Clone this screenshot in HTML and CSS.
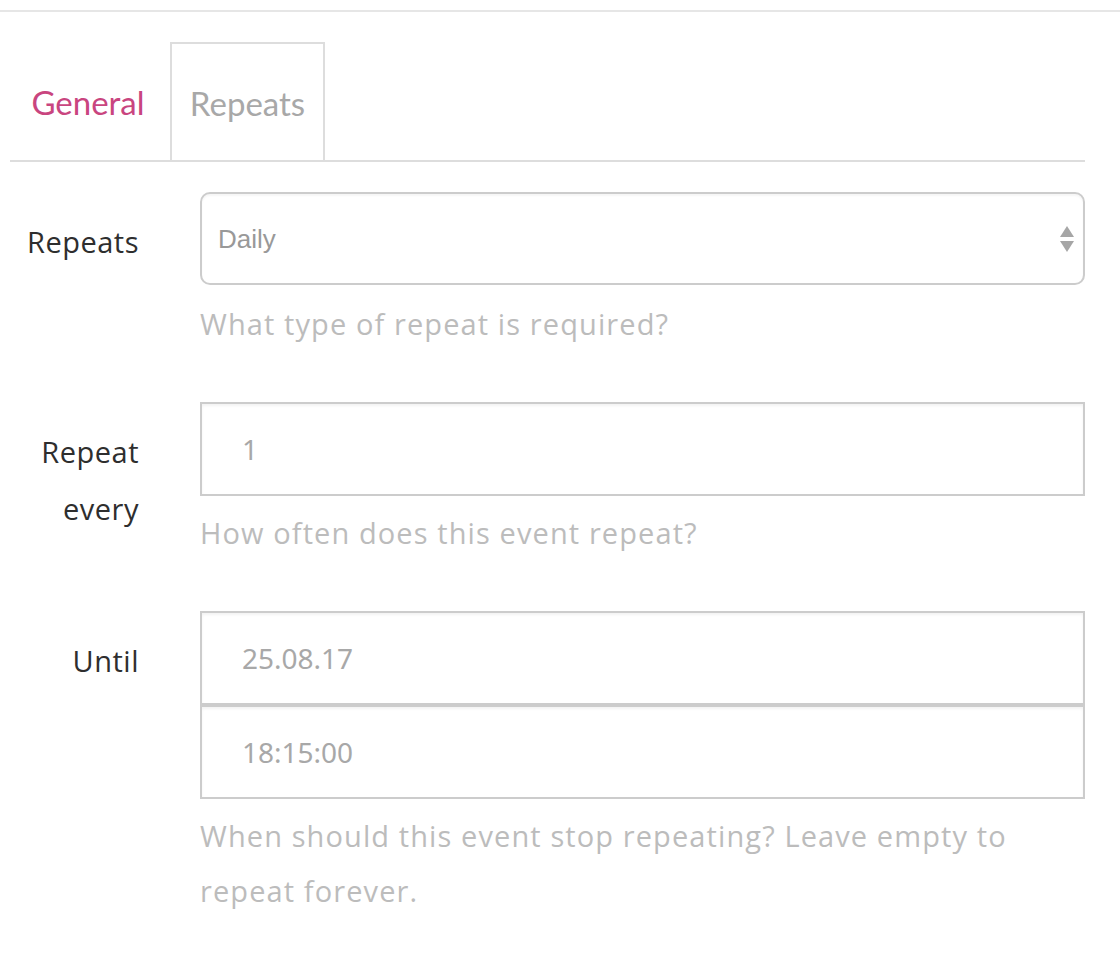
FILE: index.html
```html
<!DOCTYPE html>
<html>
<head>
<meta charset="utf-8">
<link rel="stylesheet" href="styles.css">
</head>
<body>
<div class="page">
  <div class="tabs">
    <div class="tab tab-general">General</div>
    <div class="tab tab-repeats">Repeats</div>
  </div>
  <div class="form">
    <div class="row">
      <div class="label"><span>Repeats</span></div>
      <div class="field">
        <div class="select">
          <span class="select-text">Daily</span>
          <svg class="arrows" width="16" height="28" viewBox="0 0 16 28"><path d="M8 1 L15 12 L1 12 Z" fill="#a6a6a6"/><path d="M1 16 L15 16 L8 27 Z" fill="#a6a6a6"/></svg>
        </div>
        <div class="help">What type of repeat is required?</div>
      </div>
    </div>
    <div class="row">
      <div class="label"><span>Repeat<br>every</span></div>
      <div class="field">
        <div class="input">1</div>
        <div class="help help-second">How often does this event repeat?</div>
      </div>
    </div>
    <div class="row">
      <div class="label"><span>Until</span></div>
      <div class="field">
        <div class="input">25.08.17</div>
        <div class="input">18:15:00</div>
        <div class="help help-multi">When should this event stop repeating? Leave empty to repeat forever.</div>
      </div>
    </div>
  </div>
</div>
</body>
</html>
```

FILE: styles.css
```css
html, body {
  margin: 0;
  padding: 0;
  background: #fff;
}
body {
  font-family: "Open Sans", Lato, sans-serif;
  width: 1120px;
  height: 974px;
  overflow: hidden;
}
.page {
  border-top: 2px solid #e6e6e6;
  margin-top: 10px;
  padding: 0 35px 0 10px;
}
.tabs {
  display: flex;
  margin-top: 30px;
  border-bottom: 2px solid #dddddd;
  height: 118px;
}
.tab {
  font-family: Lato, sans-serif;
  font-size: 33px;
  display: flex;
  align-items: center;
  justify-content: center;
  padding-top: 2px;
}
.tab-general {
  color: #c9457f;
  width: 160px;
  padding-right: 4px;
  box-sizing: border-box;
}
.tab-repeats {
  color: #a8a8a8;
  width: 151px;
  border: 2px solid #dddddd;
  border-bottom: none;
}
.form {
  padding-top: 30px;
}
.row {
  display: flex;
  margin-bottom: 51px;
}
.label {
  width: 129px;
  padding-right: 61px;
  text-align: right;
  font-size: 29px;
  color: #2e2e2e;
  line-height: 57px;
  padding-top: 21px;
  letter-spacing: 0.5px;
}
.field {
  flex: 1;
}
.select {
  height: 89px;
  border: 2px solid #cccccc;
  border-radius: 10px;
  display: flex;
  align-items: center;
  justify-content: space-between;
  padding: 0 8px 0 16px;
  box-shadow: inset 0 2px 2px rgba(0,0,0,0.04);
}
.select-text {
  font-family: "Liberation Sans", Arial, sans-serif;
  font-size: 26px;
  color: #999;
  padding-top: 2px;
}
.input {
  height: 90px;
  border: 2px solid #cccccc;
  box-shadow: inset 0 2px 3px rgba(0,0,0,0.05);
  display: flex;
  align-items: center;
  padding-left: 40px;
  font-family: "Noto Sans", sans-serif;
  font-size: 28px;
  color: #a8a8a8;
}
.help {
  font-size: 29px;
  color: #bcbcbc;
  margin-top: 11px;
  line-height: 55px;
  letter-spacing: 1.1px;
}
.help-second {
  margin-top: 9px;
}
.help-multi {
  max-width: 850px;
  margin-top: 9px;
}
```
